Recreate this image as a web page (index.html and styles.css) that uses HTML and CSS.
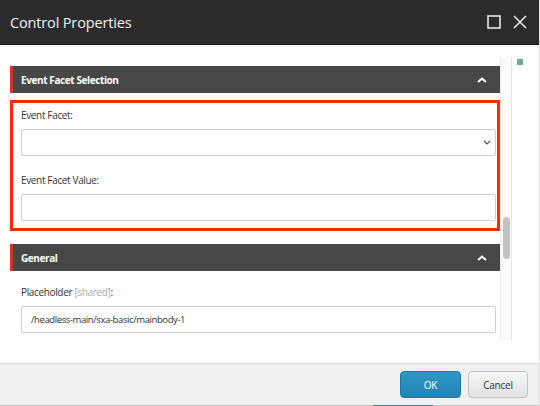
FILE: index.html
```html
<!DOCTYPE html>
<html lang="en">
<head>
<meta charset="utf-8">
<title>Control Properties</title>
<link rel="stylesheet" href="styles.css">
</head>
<body>
<div class="dialog">
  <header class="titlebar">
    <h1 class="title">Control Properties</h1>
    <div class="win-controls">
      <svg class="win-icon" width="14" height="14" viewBox="0 0 14 14"><rect x="1" y="1" width="12" height="12" fill="none" stroke="#e6e6e6" stroke-width="1.6"/></svg>
      <svg class="win-icon" width="14" height="14" viewBox="0 0 14 14"><path d="M1 1 L13 13 M13 1 L1 13" stroke="#e6e6e6" stroke-width="1.6" fill="none"/></svg>
    </div>
  </header>
  <main class="body">
    <div class="scroll-wrap">
      <div class="content">
        <div class="section-head">
          <span>Event Facet Selection</span>
          <svg class="chev-up" width="10" height="6" viewBox="0 0 10 6"><path d="M1 5 L5 1.5 L9 5" stroke="#fff" stroke-width="2" fill="none"/></svg>
        </div>
        <div class="highlight">
          <label class="field-label">Event Facet:</label>
          <div class="select">
            <svg width="8" height="5" viewBox="0 0 8 5"><path d="M1 1 L4 4 L7 1" stroke="#555" stroke-width="1.2" fill="none"/></svg>
          </div>
          <label class="field-label second">Event Facet Value:</label>
          <div class="input"></div>
        </div>
        <div class="section-head general">
          <span>General</span>
          <svg class="chev-up" width="10" height="6" viewBox="0 0 10 6"><path d="M1 5 L5 1.5 L9 5" stroke="#fff" stroke-width="2" fill="none"/></svg>
        </div>
        <div class="plain-fields">
          <label class="field-label">Placeholder <span class="muted">[shared]</span>:</label>
          <div class="input filled">/headless-main/sxa-basic/mainbody-1</div>
        </div>
      </div>
      <div class="scrollbar"><div class="thumb"></div></div>
    </div>
    <div class="side"><span class="green-dot"></span></div>
  </main>
  <footer class="footer">
    <button class="btn btn-ok">OK</button>
    <button class="btn btn-cancel">Cancel</button>
  </footer>
  <div class="bottom-edge"><span class="teal"></span></div>
</div>
</body>
</html>
```
FILE: styles.css
```css
html, body {
  margin: 0;
  padding: 0;
  background: #ffffff;
}
body {
  font-family: "Open Sans", "Liberation Sans", sans-serif;
  color: #333;
}
.dialog {
  width: 540px;
  height: 406px;
  display: flex;
  flex-direction: column;
  overflow: hidden;
  position: relative;
  box-sizing: border-box;
  border-right: 1px solid #e2e2e2;
}
.titlebar {
  height: 44px;
  flex: none;
  background: #2b2b2b;
  border-bottom: 1px solid #1c1c1c;
  display: flex;
  align-items: center;
  justify-content: space-between;
  padding: 0 12px 0 10px;
}
.title {
  margin: 0;
  font-size: 14.5px;
  font-weight: 400;
  color: #f2f2f2;
  letter-spacing: -0.15px;
  padding-top: 1px;
}
.win-controls {
  display: flex;
  gap: 12px;
  align-items: center;
}
.win-icon { display: block; }
.body {
  flex: 1;
  display: flex;
  align-items: flex-start;
  background: #fff;
}
.scroll-wrap {
  margin: 12px 0 0 10px;
  height: 283px;
  width: 502px;
  display: flex;
  flex: none;
}
.content {
  width: 490px;
  overflow: hidden;
  padding-top: 9px;
  box-sizing: border-box;
}
.section-head {
  height: 27px;
  background: #474747;
  border-left: 3px solid #d6322b;
  box-sizing: border-box;
  display: flex;
  align-items: center;
  justify-content: space-between;
  padding: 0 13px 0 8px;
  color: #fff;
  font-size: 10px;
  font-weight: 700;
  letter-spacing: -0.4px;
}
.chev-up { display: block; }
.highlight {
  margin-top: 7px;
  border: 3px solid #ff2a00;
  padding: 5px 1px 7px 8px;
  display: flex;
  flex-direction: column;
}
.field-label {
  display: block;
  font-size: 10px;
  line-height: 15px;
  letter-spacing: -0.35px;
  color: #333;
}
.field-label.second { margin-top: 17px; }
.muted { color: #a8a8a8; }
.select, .input {
  margin-top: 6px;
  height: 27px;
  box-sizing: border-box;
  border: 1px solid #cfcfcf;
  border-radius: 2px;
  background: #fff;
}
.select {
  display: flex;
  align-items: center;
  justify-content: flex-end;
  padding-right: 4px;
}
.select svg { display: block; }
.input.filled {
  display: flex;
  align-items: center;
  padding-left: 9px;
  font-size: 9.5px;
  letter-spacing: -0.4px;
  color: #333;
}
.section-head.general { margin-top: 13px; }
.plain-fields {
  padding: 14px 4px 0 11px;
}
.scrollbar {
  width: 12px;
  height: 100%;
  background: #fafafa;
  border-left: 1px solid #ececec;
  border-right: 1px solid #e6e6e6;
  box-sizing: border-box;
  flex: none;
  display: flex;
  justify-content: center;
}
.thumb {
  margin-top: 160px;
  width: 7px;
  height: 42px;
  border-radius: 4px;
  background: #c3c3c3;
}
.side {
  padding: 14px 0 0 5px;
}
.green-dot {
  display: block;
  width: 6px;
  height: 6px;
  background: #6fa997;
}
.footer {
  flex: none;
  height: 42px;
  background: #f0f0f0;
  border-top: 1px solid #dcdcdc;
  display: flex;
  justify-content: flex-end;
  align-items: flex-start;
  gap: 7px;
  padding: 7px 11px 0 0;
  box-sizing: border-box;
}
.btn {
  font-family: "Open Sans", "Liberation Sans", sans-serif;
  font-size: 10px;
  letter-spacing: -0.2px;
  height: 27px;
  border-radius: 4px;
  padding: 0;
  cursor: pointer;
}
.btn-ok {
  width: 61px;
  color: #fff;
  background: linear-gradient(#2f98c7, #2483b2);
  border: 1px solid #1f77a3;
}
.btn-cancel {
  width: 60px;
  color: #333;
  background: linear-gradient(#f7f7f7, #e2e2e2);
  border: 1px solid #c4c4c4;
}
.bottom-edge {
  height: 1px;
  flex: none;
  background: #c8c8c8;
  position: relative;
}
.teal {
  position: absolute;
  left: 373px;
  top: 0;
  width: 60px;
  height: 1px;
  background: #3c7f94;
}
```
